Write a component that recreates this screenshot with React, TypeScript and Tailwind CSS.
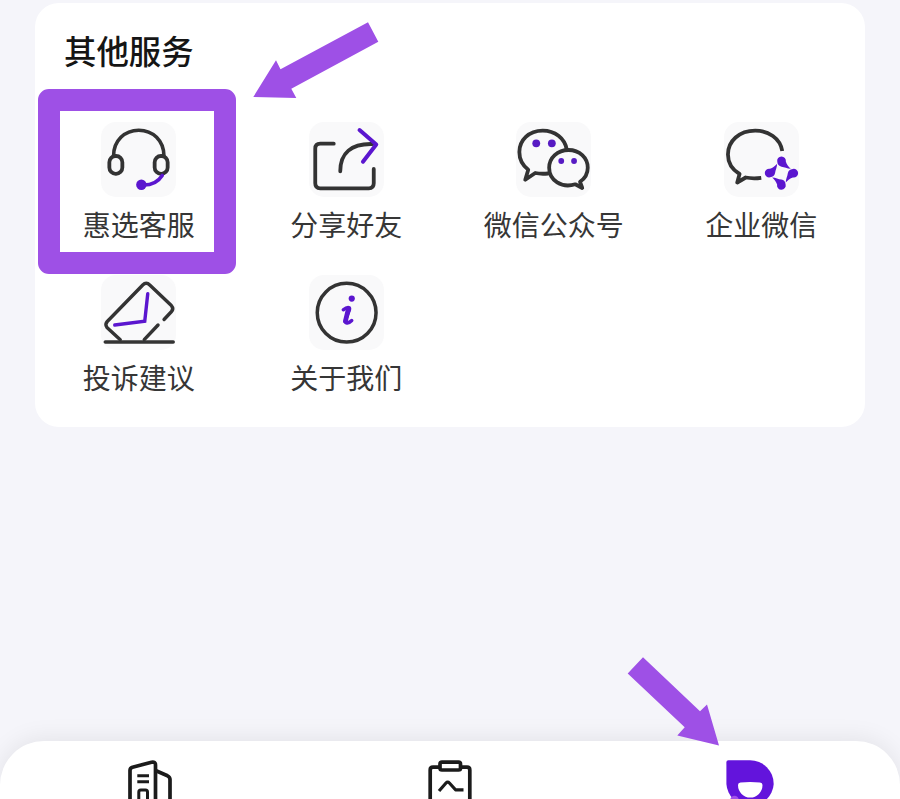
import type { ReactNode } from 'react';

const INK = '#333333';
const VIOLET = '#5b16cf';

function Tile({ box, children }: { box: string; children: ReactNode }) {
  return (
    <div className="h-[75px] w-[75px] rounded-[15px] bg-[#f9f9fa]">
      <svg viewBox={box} width="75" height="75" className="overflow-visible" fill="none" stroke={INK} strokeWidth="3.8" strokeLinecap="round" strokeLinejoin="round">
        {children}
      </svg>
    </div>
  );
}

function Headset() {
  return (
    <Tile box="101.25 122 75 75">
      <path d="M113.8 156 C113.8 140.5 125 130.2 139 130.2 C153 130.2 164.2 140.5 164.2 156" strokeWidth="3.6" />
      <rect x="109.6" y="156" width="13" height="17.8" rx="6.3" />
      <rect x="154.9" y="156" width="13" height="17.8" rx="6.3" />
      <path d="M162.5 175.5 C158 182.5 151 185.5 142 185" stroke={VIOLET} strokeWidth="3.6" />
      <circle cx="141.6" cy="184.8" r="5.2" fill={VIOLET} stroke="none" />
    </Tile>
  );
}

function Share() {
  return (
    <Tile box="308.75 122 75 75">
      <path d="M333.5 143.7 H320 Q315 143.7 315 148.7 V183.3 Q315 188.3 320 188.3 H368.5 Q373.5 188.3 373.5 183.3 V169" />
      <path d="M340 171.3 C340 153 351 143.5 372 144" />
      <path d="M359.3 130 L376 144.5 L362.7 161.7" stroke={VIOLET} strokeWidth="4" />
    </Tile>
  );
}

function Chat() {
  return (
    <Tile box="516.25 122 75 75">
      <path d="M567 149.5 C565 138 555 130.6 543 130.6 C529 130.6 519.6 140.2 519.6 152 C519.6 160 523 165.5 528.5 169.7 L525.5 179.8 L535.5 173 Q541 174.2 548.3 173.5" />
      <path d="M580.3 181.8 L582.5 188 L575.5 184.3 C562 188.5 549.4 180.5 549.4 167.8 C549.4 157.8 557.8 150 568.8 150 C579.8 150 588 157.8 588 167.8 C588 173.6 585.3 178.4 580.3 181.8 Z" />
      <g fill="#571bc3" stroke="none">
        <circle cx="536.5" cy="143.3" r="3.9" />
        <circle cx="552.1" cy="143.3" r="3.9" />
        <circle cx="561.5" cy="161" r="2.9" />
        <circle cx="574.3" cy="161" r="2.9" />
      </g>
    </Tile>
  );
}

const petal = 'M776.8 161.2 A4.6 4.6 0 1 1 785.8 161 C786.5 164 788.8 166.5 791 168.6 C787 168.4 784.5 166.8 781.3 166.4 Q777.2 165.6 776.8 161.2Z';

function WorkChat() {
  return (
    <Tile box="723.75 122 75 75">
      <path d="M782 151 C780 138 768 130.6 755 130.6 C739 130.6 727.7 141 727.7 154.5 C727.7 162.5 731.5 169.3 739.3 174 L737 182.5 L745.5 177.5 C751 178.6 755 178.6 761 177.8" strokeLinecap="butt" />
      <g fill={VIOLET} stroke="none" transform="translate(781.2 173.1) scale(0.95) translate(-781.2 -173.1)">
        <path d={petal} />
        <path transform="rotate(90 781.2 173.1)" d={petal} />
        <path transform="rotate(180 781.2 173.1)" d={petal} />
        <path transform="rotate(270 781.2 173.1)" d={petal} />
      </g>
    </Tile>
  );
}

function Envelope() {
  return (
    <Tile box="101.25 275 75 75">
      <g strokeWidth="3.4">
        <path d="M120.5 339.7 L107.2 327.5 Q104.8 324.5 107.5 321.5 L143 285 Q146.5 281.4 150 285 L171.6 305.5 Q174.2 308.5 171.8 311.5 L164.3 319.5" />
        <path d="M158.3 325 L144.5 339.7" />
        <path d="M105.5 342 H173.5" />
      </g>
      <path d="M148 293.7 L145 321.3 L115 325" stroke={VIOLET} strokeWidth="3.4" strokeLinejoin="miter" />
    </Tile>
  );
}

function Info() {
  return (
    <Tile box="308.75 275 75 75">
      <circle cx="346.4" cy="312.7" r="29.4" strokeWidth="3.5" />
      <circle cx="351.5" cy="298.6" r="3.1" fill={VIOLET} stroke="none" />
      <path d="M343 309.8 Q347 306.6 349 307.8 Q349.8 308.6 348.8 311 L345.3 320 Q344.4 323.4 347 323 Q349.5 322.6 351.5 320.5" stroke={VIOLET} strokeWidth="3.4" />
      <path d="M348 309.5 L345.2 321" stroke={VIOLET} strokeWidth="4.8" />
    </Tile>
  );
}

const services = [
  { label: '惠选客服', icon: <Headset /> },
  { label: '分享好友', icon: <Share /> },
  { label: '微信公众号', icon: <Chat /> },
  { label: '企业微信', icon: <WorkChat /> },
  { label: '投诉建议', icon: <Envelope /> },
  { label: '关于我们', icon: <Info /> },
];

export default function App() {
  return (
    <div className="relative flex h-[799px] w-[900px] flex-col overflow-hidden bg-[#f5f5fa] font-['Noto_Sans_CJK_SC',sans-serif]">
      <section className="mx-[35px] mt-[3px] h-[424px] shrink-0 rounded-[24px] bg-white">
        <h1 className="pt-[24px] pl-[29px] text-[32.4px] leading-[46px] font-medium text-[#151515]">其他服务</h1>
        <div className="mt-[49px] grid grid-cols-4 gap-y-[37px]">
          {services.map((s) => (
            <div key={s.label} className="flex h-[116px] flex-col items-center">
              {s.icon}
              <span className="mt-[8px] text-[28px] leading-[39px] whitespace-nowrap text-[#363636]">{s.label}</span>
            </div>
          ))}
        </div>
      </section>

      <nav className="mt-auto grid h-[58px] shrink-0 grid-cols-3 rounded-t-[44px] bg-white shadow-[0_-2px_24px_rgba(0,0,0,0.08)]">
        <div className="flex justify-center">
          <svg viewBox="120 741 60 58" width="60" height="58" fill="none" stroke="#1b1b1b" strokeWidth="3.7" strokeLinejoin="round">
            <path d="M130 804 V770.5 Q130 768 132.5 767.2 L151.5 762.3 Q155.5 761.5 155.5 765 V804" />
            <path d="M155.5 770.5 L167.5 775.8 Q170 777 170 779.5 V804" />
            <path d="M137.3 775.7 H149 M137.3 781.8 H149 M138.8 804 V792 Q138.8 790 140.8 790 H145.5 Q147.5 790 147.5 792 V804" strokeWidth="3" />
          </svg>
        </div>
        <div className="flex justify-center">
          <svg viewBox="420 741 60 58" width="60" height="58" fill="none" stroke="#1b1b1b" strokeWidth="3.7" strokeLinejoin="round">
            <path d="M439 767.2 H433 Q430.2 767.2 430.2 770 V804 M461 767.2 H467 Q469.8 767.2 469.8 770 V804" />
            <rect x="440" y="762.2" width="20.5" height="7.8" rx="2" />
            <path d="M439 791 L446 783 Q447.7 781.2 449.4 783 L455.5 789.8 H463.5" strokeWidth="3.2" />
          </svg>
        </div>
        <div className="flex justify-center">
          <svg viewBox="720 741 60 58" width="60" height="58">
            <path d="M726.4 762 Q726.4 760.2 728.4 760.2 H750 A23.7 23.7 0 0 1 773.7 783.9 A23.7 23.7 0 0 1 726.4 783.9 Z" fill="#6314dc" />
            <path d="M738 785 Q738 782.8 740.5 782.6 Q750 781.6 760 782.6 Q762.5 782.8 762.5 785 A12.2 12.5 0 0 1 738 785 Z" fill="#fff" />
            <circle cx="734.5" cy="800" r="4.3" fill="#a24eea" />
          </svg>
        </div>
      </nav>

      <div className="absolute top-[89px] left-[38px] h-[185px] w-[198px] rounded-[11px] border-[22px] border-[#9e50e6]" />
      <svg className="absolute top-[22px] left-[253px]" width="126" height="77" viewBox="253 22 126 77">
        <path d="M253.3 97 L276 60.3 L280.5 69.3 L368 22.3 L378.3 41.7 L291.3 88.7 L296.3 98 Z" fill="#9e50e6" />
      </svg>
      <svg className="absolute top-[657px] left-[627px]" width="93" height="90" viewBox="627 657 93 90">
        <path d="M719 745.5 L707 704.5 L700 711.3 L643 657.3 L627.7 673.5 L684.7 727.3 L677.3 735.5 Z" fill="#9e50e6" />
      </svg>
    </div>
  );
}
